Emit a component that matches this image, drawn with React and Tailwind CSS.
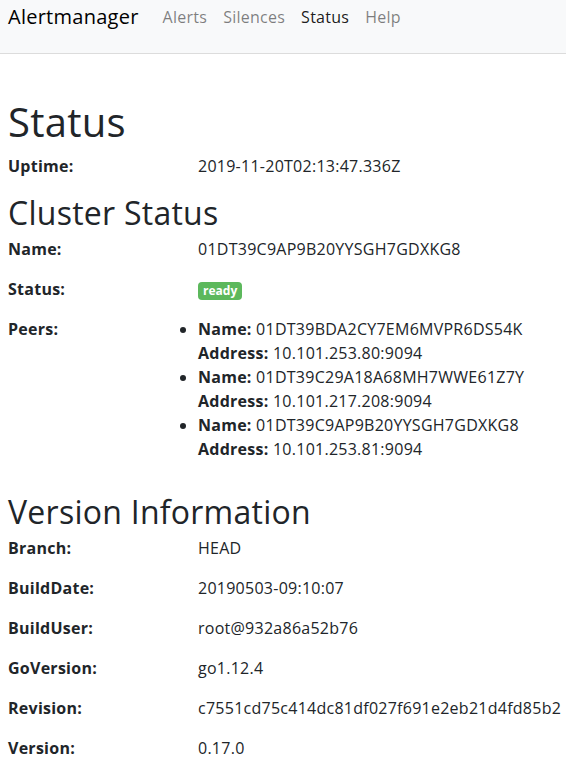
import React from "react";

const font = { fontFamily: '"Open Sans", "Noto Sans", sans-serif' };

const peers = [
  { name: "01DT39BDA2CY7EM6MVPR6DS54K", address: "10.101.253.80:9094" },
  { name: "01DT39C29A18A68MH7WWE61Z7Y", address: "10.101.217.208:9094" },
  { name: "01DT39C9AP9B20YYSGH7GDXKG8", address: "10.101.253.81:9094" },
];

const versionInfo = [
  ["Branch:", "HEAD"],
  ["BuildDate:", "20190503-09:10:07"],
  ["BuildUser:", "root@932a86a52b76"],
  ["GoVersion:", "go1.12.4"],
  ["Revision:", "c7551cd75c414dc81df027f691e2eb21d4fd85b2"],
  ["Version:", "0.17.0"],
];

function Row({ label, children }) {
  return (
    <div className="flex mb-4 leading-6">
      <div className="w-[190px] shrink-0 font-bold">{label}</div>
      <div className="flex-1 whitespace-nowrap">{children}</div>
    </div>
  );
}

export default function App() {
  return (
    <div className="min-h-screen bg-white text-[#212529] text-base tracking-[0.016em]" style={font}>
      <nav className="h-[54px] bg-[#f8f9fa] border-b border-[#dcdcdc] flex items-start pt-[2px] px-2">
        <span className="text-[20px] leading-[30px] text-black mr-4">Alertmanager</span>
        <ul className="flex leading-[30px]">
          <li className="px-2 text-black/50">Alerts</li>
          <li className="px-2 text-black/50">Silences</li>
          <li className="px-2 text-black/90">Status</li>
          <li className="px-2 text-black/50">Help</li>
        </ul>
      </nav>

      <main className="px-2 pt-[44px]">
        <h1 className="text-[40px] leading-[48px] mb-2 font-normal">Status</h1>
        <Row label="Uptime:">2019-11-20T02:13:47.336Z</Row>

        <h2 className="text-[32px] leading-[38px] mb-[5px] font-normal">Cluster Status</h2>
        <Row label="Name:">01DT39C9AP9B20YYSGH7GDXKG8</Row>
        <Row label="Status:">
          <span className="inline-block align-middle bg-[#5cb85c] text-white font-bold text-[12px] leading-none px-[5px] py-[3px] rounded-[4px] tracking-normal">
            ready
          </span>
        </Row>
        <Row label="Peers:">
          <ul className="list-disc pl-0 mb-4">
            {peers.map((p) => (
              <li key={p.name}>
                <div>
                  <b>Name:</b> {p.name}
                </div>
                <div>
                  <b>Address:</b> {p.address}
                </div>
              </li>
            ))}
          </ul>
        </Row>

        <h2 className="text-[32px] leading-[38px] mb-[5px] font-normal">Version Information</h2>
        {versionInfo.map(([k, v]) => (
          <Row key={k} label={k}>
            {v}
          </Row>
        ))}
      </main>
    </div>
  );
}
